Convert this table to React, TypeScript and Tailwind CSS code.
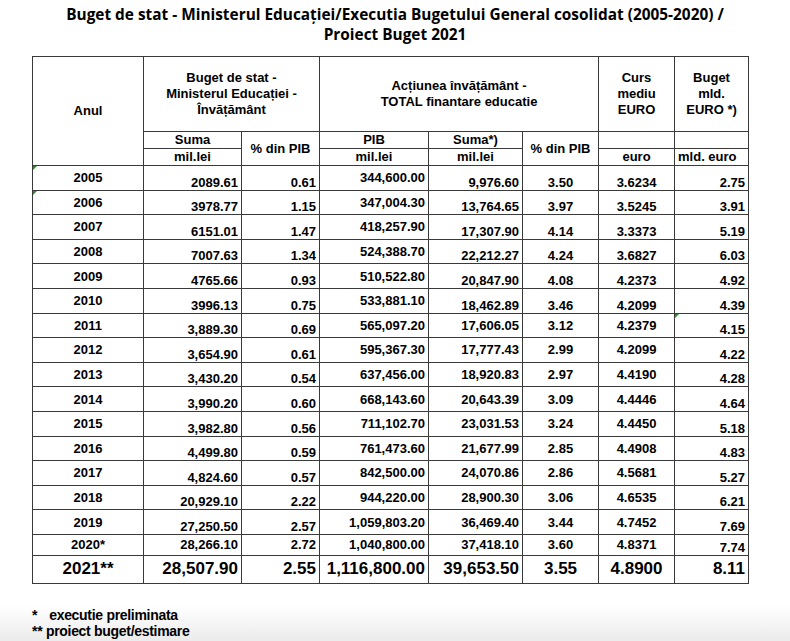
import React from 'react';

type Row = {
  year: string;
  vals: string[];
  early?: boolean;
  mark?: boolean;
  markLast?: boolean;
};

const rows: Row[] = [
  { year: '2005', vals: ['2089.61', '0.61', '344,600.00', '9,976.60', '3.50', '3.6234', '2.75'], early: true, mark: true },
  { year: '2006', vals: ['3978.77', '1.15', '347,004.30', '13,764.65', '3.97', '3.5245', '3.91'], early: true, mark: true },
  { year: '2007', vals: ['6151.01', '1.47', '418,257.90', '17,307.90', '4.14', '3.3373', '5.19'], early: true },
  { year: '2008', vals: ['7007.63', '1.34', '524,388.70', '22,212.27', '4.24', '3.6827', '6.03'], early: true },
  { year: '2009', vals: ['4765.66', '0.93', '510,522.80', '20,847.90', '4.08', '4.2373', '4.92'], early: true },
  { year: '2010', vals: ['3996.13', '0.75', '533,881.10', '18,462.89', '3.46', '4.2099', '4.39'], early: true },
  { year: '2011', vals: ['3,889.30', '0.69', '565,097.20', '17,606.05', '3.12', '4.2379', '4.15'], markLast: true },
  { year: '2012', vals: ['3,654.90', '0.61', '595,367.30', '17,777.43', '2.99', '4.2099', '4.22'] },
  { year: '2013', vals: ['3,430.20', '0.54', '637,456.00', '18,920.83', '2.97', '4.4190', '4.28'] },
  { year: '2014', vals: ['3,990.20', '0.60', '668,143.60', '20,643.39', '3.09', '4.4446', '4.64'] },
  { year: '2015', vals: ['3,982.80', '0.56', '711,102.70', '23,031.53', '3.24', '4.4450', '5.18'] },
  { year: '2016', vals: ['4,499.80', '0.59', '761,473.60', '21,677.99', '2.85', '4.4908', '4.83'] },
  { year: '2017', vals: ['4,824.60', '0.57', '842,500.00', '24,070.86', '2.86', '4.5681', '5.27'] },
  { year: '2018', vals: ['20,929.10', '2.22', '944,220.00', '28,900.30', '3.06', '4.6535', '6.21'] },
  { year: '2019', vals: ['27,250.50', '2.57', '1,059,803.20', '36,469.40', '3.44', '4.7452', '7.69'] },
];

const cell = 'border border-[#3a3a3a] px-[3px] py-0';

const Mark = () => (
  <span className="absolute left-0 top-0 h-0 w-0 border-t-[4px] border-r-[4px] border-t-[#2e8b2e] border-r-transparent" />
);

export default function App() {
  return (
    <div className="h-[641px] w-[790px] bg-[linear-gradient(to_bottom,#ffffff_0px,#ffffff_606px,#ebebeb_641px)] text-black">
      <div className="pt-[5px] text-center font-['Open_Sans',sans-serif] text-[15.4px] font-bold leading-[20px]">
        <div>Buget de stat - Ministerul Educației/Executia Bugetului General cosolidat (2005-2020) /</div>
        <div>Proiect Buget 2021</div>
      </div>

      <table className="ml-[32px] mt-[11px] w-[716px] table-fixed border-collapse font-['Liberation_Sans',Arial,sans-serif] text-[13px] font-bold leading-[16px]">
        <colgroup>
          <col className="w-[111px]" />
          <col className="w-[98px]" />
          <col className="w-[78px]" />
          <col className="w-[109px]" />
          <col className="w-[94px]" />
          <col className="w-[76px]" />
          <col className="w-[76px]" />
          <col className="w-[74px]" />
        </colgroup>
        <thead>
          <tr className="h-[75px]">
            <th rowSpan={3} className={`${cell} text-center align-middle`}>Anul</th>
            <th colSpan={2} className={`${cell} text-center align-middle`}>
              Buget de stat -<br />Ministerul Educației -<br />Învățământ
            </th>
            <th colSpan={3} className={`${cell} text-center align-middle`}>
              Acțiunea învățământ -<br />TOTAL finantare educatie
            </th>
            <th className={`${cell} text-center align-middle`}>
              Curs<br />mediu<br />EURO
            </th>
            <th className={`${cell} text-center align-middle`}>
              Buget<br />mld.<br />EURO *)
            </th>
          </tr>
          <tr className="h-[17px]">
            <th className={`${cell} text-center align-middle`}>Suma</th>
            <th rowSpan={2} className={`${cell} text-center align-middle`}>% din PIB</th>
            <th className={`${cell} text-center align-middle`}>PIB</th>
            <th className={`${cell} text-center align-middle`}>Suma*)</th>
            <th rowSpan={2} className={`${cell} text-center align-middle`}>% din PIB</th>
            <th className={cell}></th>
            <th className={cell}></th>
          </tr>
          <tr className="h-[17px]">
            <th className={`${cell} text-center align-middle`}>mil.lei</th>
            <th className={`${cell} text-center align-middle`}>mil.lei</th>
            <th className={`${cell} text-center align-middle`}>mil.lei</th>
            <th className={`${cell} text-center align-middle`}>euro</th>
            <th className={`${cell} text-left align-middle`}>mld. euro</th>
          </tr>
        </thead>
        <tbody className="leading-[15px]">
          {rows.map((r) => {
            const v = r.early ? 'align-bottom' : 'align-middle';
            return (
              <tr key={r.year} className="h-[24.6px]">
                <td className={`${cell} relative text-center align-middle`}>
                  {r.mark && <Mark />}
                  {r.year}
                </td>
                <td className={`${cell} text-right align-bottom`}>{r.vals[0]}</td>
                <td className={`${cell} text-right align-bottom`}>{r.vals[1]}</td>
                <td className={`${cell} text-right align-middle`}>{r.vals[2]}</td>
                <td className={`${cell} text-right ${v}`}>{r.vals[3]}</td>
                <td className={`${cell} text-center ${v}`}>{r.vals[4]}</td>
                <td className={`${cell} text-center ${v}`}>{r.vals[5]}</td>
                <td className={`${cell} relative text-right align-bottom`}>
                  {r.markLast && <Mark />}
                  {r.vals[6]}
                </td>
              </tr>
            );
          })}
          <tr className="h-[21px]">
            <td className={`${cell} text-center align-middle`}>2020*</td>
            <td className={`${cell} text-right align-middle`}>28,266.10</td>
            <td className={`${cell} text-right align-middle`}>2.72</td>
            <td className={`${cell} text-right align-middle`}>1,040,800.00</td>
            <td className={`${cell} text-right align-middle`}>37,418.10</td>
            <td className={`${cell} text-center align-middle`}>3.60</td>
            <td className={`${cell} text-center align-middle`}>4.8371</td>
            <td className={`${cell} text-right align-bottom`}>7.74</td>
          </tr>
          <tr className="h-[28px] text-[17px] leading-[20px]">
            <td className={`${cell} text-center align-middle`}>2021**</td>
            <td className={`${cell} text-right align-middle`}>28,507.90</td>
            <td className={`${cell} text-right align-middle`}>2.55</td>
            <td className={`${cell} text-right align-middle`}>1,116,800.00</td>
            <td className={`${cell} text-right align-middle`}>39,653.50</td>
            <td className={`${cell} text-center align-middle`}>3.55</td>
            <td className={`${cell} text-center align-middle`}>4.8900</td>
            <td className={`${cell} text-right align-middle`}>8.11</td>
          </tr>
        </tbody>
      </table>

      <div className="ml-[32px] mt-[23px] font-['Liberation_Sans',Arial,sans-serif] text-[14px] font-bold leading-[16px] tracking-[-0.3px]">
        <div>
          *<span className="ml-[12px]">executie preliminata</span>
        </div>
        <div>** proiect buget/estimare</div>
      </div>
    </div>
  );
}
